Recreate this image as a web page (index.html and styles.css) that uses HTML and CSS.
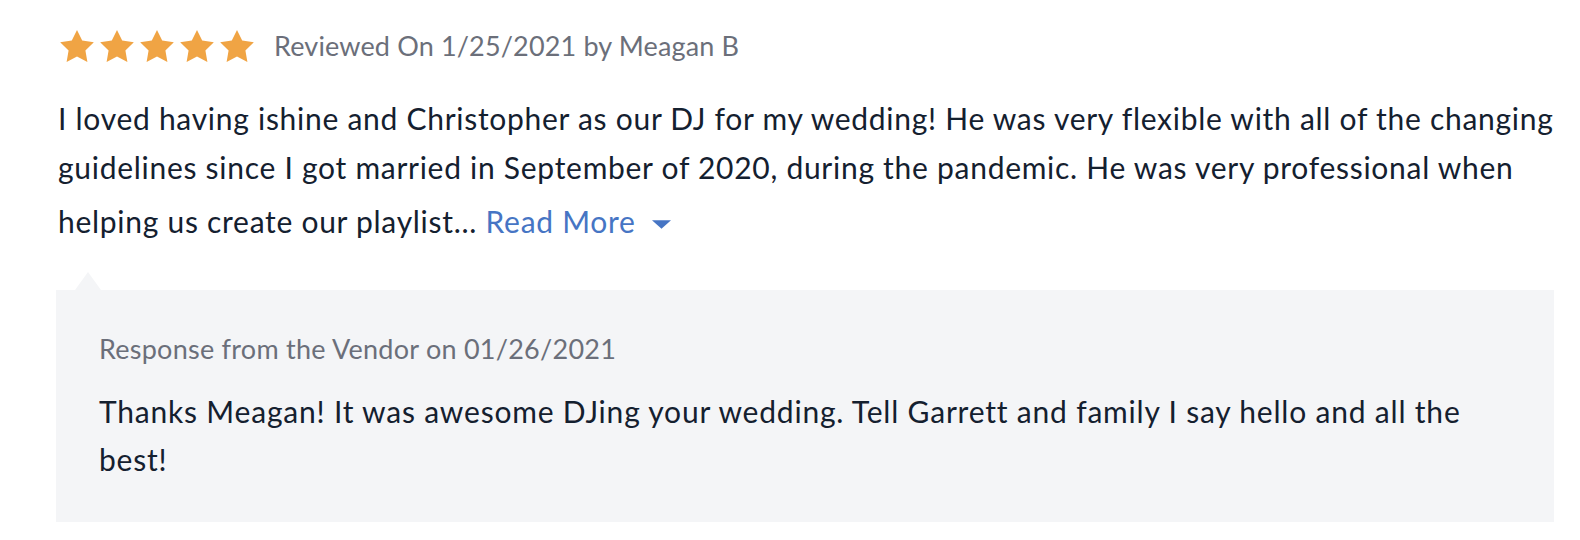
FILE: index.html
```html
<!DOCTYPE html>
<html lang="en">
<head>
<meta charset="utf-8">
<title>Review</title>
<link rel="stylesheet" href="styles.css">
</head>
<body>
<div class="review">
  <div class="review-head">
    <div class="stars">
      <svg class="star" viewBox="2 2 20 19.02"><path d="M12 2l3.09 6.26L22 9.27l-5 4.87 1.18 6.88L12 17.77l-6.18 3.25L7 14.14 2 9.27l6.91-1.01L12 2z"/></svg>
      <svg class="star" viewBox="2 2 20 19.02"><path d="M12 2l3.09 6.26L22 9.27l-5 4.87 1.18 6.88L12 17.77l-6.18 3.25L7 14.14 2 9.27l6.91-1.01L12 2z"/></svg>
      <svg class="star" viewBox="2 2 20 19.02"><path d="M12 2l3.09 6.26L22 9.27l-5 4.87 1.18 6.88L12 17.77l-6.18 3.25L7 14.14 2 9.27l6.91-1.01L12 2z"/></svg>
      <svg class="star" viewBox="2 2 20 19.02"><path d="M12 2l3.09 6.26L22 9.27l-5 4.87 1.18 6.88L12 17.77l-6.18 3.25L7 14.14 2 9.27l6.91-1.01L12 2z"/></svg>
      <svg class="star" viewBox="2 2 20 19.02"><path d="M12 2l3.09 6.26L22 9.27l-5 4.87 1.18 6.88L12 17.77l-6.18 3.25L7 14.14 2 9.27l6.91-1.01L12 2z"/></svg>
    </div>
    <span class="meta">Reviewed On 1/25/2021 by Meagan B</span>
  </div>
  <p class="review-text">I loved having ishine and Christopher as our DJ for my wedding! He was very flexible with all of the changing guidelines since I got married in September of 2020, during the pandemic. He was very professional when helping us create our playlist... <a class="read-more" href="#">Read More</a><svg class="caret" viewBox="0 0 20 9"><path d="M0 0h20L10 9z"/></svg></p>
  <div class="response">
    <div class="response-meta">Response from the Vendor on 01/26/2021</div>
    <p class="response-text">Thanks Meagan! It was awesome DJing your wedding. Tell Garrett and family I say hello and all the best!</p>
  </div>
</div>
</body>
</html>
```
FILE: styles.css
```css
html, body {
  margin: 0;
  padding: 0;
  background: #ffffff;
}
body {
  font-family: Lato, "Open Sans", "Liberation Sans", sans-serif;
  color: #14202f;
}
.review {
  width: 1498px;
  padding: 30px 0 0 56px;
}
.review-head {
  display: flex;
  align-items: center;
  gap: 20px;
  height: 32px;
}
.stars {
  display: flex;
  gap: 6px;
  padding-left: 4px;
}
.star {
  width: 34px;
  height: 32px;
  fill: #f0a444;
  display: block;
}
.meta {
  font-size: 27px;
  letter-spacing: 0.15px;
  color: #6b6f7a;
  line-height: 32px;
}
.review-text {
  margin: 32px 0 0 2px;
  font-size: 30px;
  letter-spacing: 0.72px;
  line-height: 49px;
}
.read-more {
  line-height: 59px;
  color: #4675c4;
  text-decoration: none;
}
.caret {
  width: 19px;
  height: 9px;
  fill: #4675c4;
  margin-left: 16px;
  vertical-align: 4px;
}
.response {
  position: relative;
  margin-top: 39px;
  background: #f4f5f7;
  padding: 41px 42px 39px 43px;
}
.response::before {
  content: "";
  position: absolute;
  left: 19px;
  top: -18px;
  border-left: 13px solid transparent;
  border-right: 13px solid transparent;
  border-bottom: 18px solid #f4f5f7;
}
.response-meta {
  font-size: 27px;
  letter-spacing: 0.25px;
  line-height: 36px;
  color: #6b6f7a;
}
.response-text {
  margin: 20px 0 0;
  font-size: 30px;
  letter-spacing: 0.8px;
  line-height: 48px;
}
```
